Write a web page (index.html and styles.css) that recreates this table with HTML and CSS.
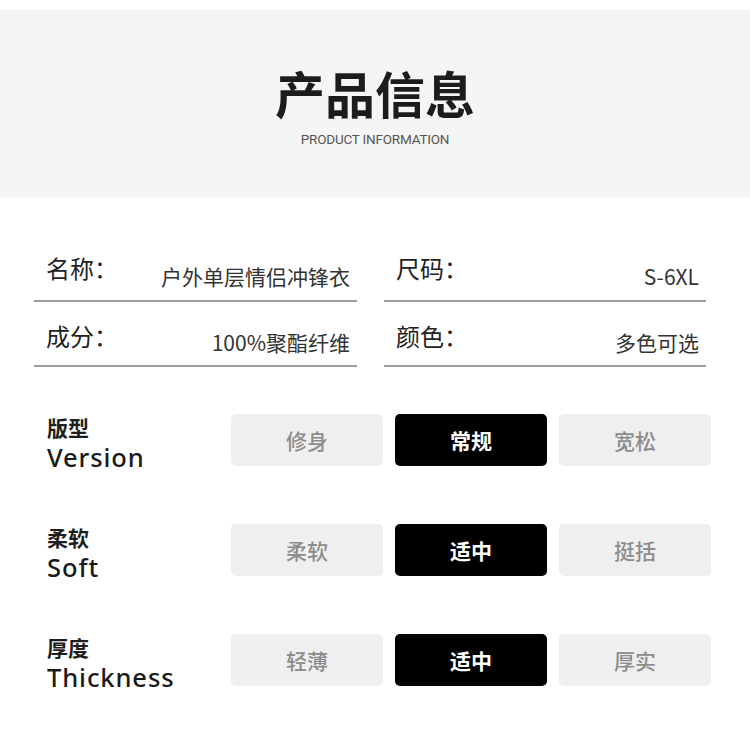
FILE: index.html
```html
<!DOCTYPE html>
<html lang="zh">
<head>
<meta charset="utf-8">
<title>产品信息</title>
<link rel="stylesheet" href="styles.css">
</head>
<body>
<header class="hero">
  <h1 class="hero-title">产品信息</h1>
  <p class="hero-sub">PRODUCT INFORMATION</p>
</header>

<section class="info">
  <div class="info-cell row1"><span class="info-label">名称：</span><span class="info-value">户外单层情侣冲锋衣</span></div>
  <div class="info-cell row1"><span class="info-label">尺码：</span><span class="info-value">S-6XL</span></div>
  <div class="info-cell row2"><span class="info-label">成分：</span><span class="info-value">100%聚酯纤维</span></div>
  <div class="info-cell row2"><span class="info-label">颜色：</span><span class="info-value">多色可选</span></div>
</section>

<section class="options">
  <div class="opt-row">
    <div class="opt-label"><div class="opt-cn">版型</div><div class="opt-en">Version</div></div>
    <div class="opt-btns">
      <div class="btn">修身</div>
      <div class="btn btn-on">常规</div>
      <div class="btn">宽松</div>
    </div>
  </div>
  <div class="opt-row">
    <div class="opt-label"><div class="opt-cn">柔软</div><div class="opt-en">Soft</div></div>
    <div class="opt-btns">
      <div class="btn">柔软</div>
      <div class="btn btn-on">适中</div>
      <div class="btn">挺括</div>
    </div>
  </div>
  <div class="opt-row">
    <div class="opt-label"><div class="opt-cn">厚度</div><div class="opt-en">Thickness</div></div>
    <div class="opt-btns">
      <div class="btn">轻薄</div>
      <div class="btn btn-on">适中</div>
      <div class="btn">厚实</div>
    </div>
  </div>
</section>
</body>
</html>
```

FILE: styles.css
```css
* { box-sizing: border-box; }
html, body { margin: 0; padding: 0; background: #ffffff; }
body {
  width: 750px;
  height: 752px;
  overflow: hidden;
  font-family: "Noto Sans CJK SC", "Noto Sans", sans-serif;
  color: #222;
}

.hero {
  margin-top: 10px;
  height: 187px;
  background: #f5f5f5;
  padding-top: 57px;
  text-align: center;
}
.hero-title {
  margin: 0;
  font-size: 50px;
  line-height: 50px;
  font-weight: 700;
  color: #1c1c1c;
}
.hero-sub {
  margin: 14px 0 0;
  font-family: "Roboto", "Noto Sans", sans-serif;
  font-size: 13.5px;
  line-height: 16px;
  color: #555;
  letter-spacing: -0.2px;
}

.info {
  display: grid;
  grid-template-columns: 323px 322px;
  column-gap: 27px;
  padding-left: 34px;
  margin-top: 48px;
}
.info-cell {
  display: flex;
  justify-content: space-between;
  align-items: flex-start;
  padding: 0 7px 0 12px;
  border-bottom: 2px solid #9c9c9c;
}
.row1 { height: 57px; }
.row2 { height: 65px; }
.info-label {
  font-size: 24px;
  line-height: 30px;
  color: #222;
}
.info-value {
  font-size: 21px;
  line-height: 30px;
  color: #333;
}
.row1 .info-label { margin-top: 8px; }
.row1 .info-value { margin-top: 16px; }
.row2 .info-label { margin-top: 19px; }
.row2 .info-value { margin-top: 25px; }

.options {
  margin-top: 47px;
  padding-left: 47px;
  display: grid;
  row-gap: 50px;
}
.opt-row {
  display: flex;
  align-items: flex-start;
}
.opt-label {
  width: 184px;
  height: 60px;
}
.opt-cn {
  font-size: 21px;
  line-height: 26px;
  font-weight: 700;
  color: #1e1e1e;
}
.opt-en {
  font-family: "Noto Sans", sans-serif;
  font-size: 25.5px;
  line-height: 34px;
  font-weight: 500;
  color: #1a1a1a;
  letter-spacing: 0.9px;
}
.opt-btns {
  display: flex;
  gap: 12px;
}
.btn {
  width: 152px;
  height: 52px;
  border-radius: 5px;
  background: #efefef;
  color: #8c8c8c;
  font-size: 21px;
  font-weight: 500;
  display: flex;
  align-items: center;
  justify-content: center;
}
.btn-on {
  background: #000;
  color: #fff;
  font-weight: 700;
}
```
